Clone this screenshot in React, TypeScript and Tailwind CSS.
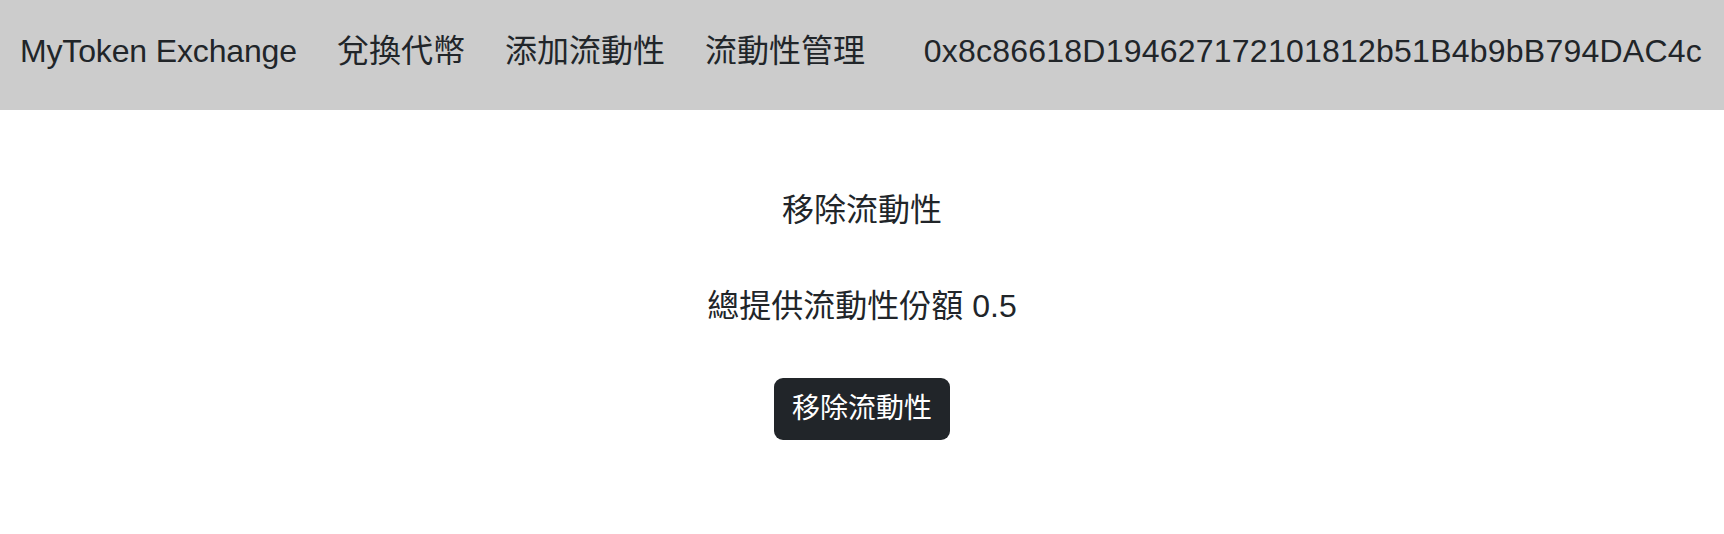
const font = { fontFamily: '"Liberation Sans", "Noto Sans CJK TC", Arial, sans-serif' };

export default function App() {
    const links = ["兌換代幣", "添加流動性", "流動性管理"];

    return (
        <div className="min-h-screen w-full bg-white text-[#212529]" style={font}>
            {/* Navbar */}
            <nav className="h-[110px] w-full bg-[#cccccc] flex flex-row items-start pt-[27px] pl-[20px] pr-[22px]">
                <div className="flex flex-row gap-[40px] text-[32px] leading-[48px]">
                    <span className="tracking-[-0.15px]">MyToken Exchange</span>
                    {links.map((l) => (
                        <a key={l} className="cursor-pointer">
                            {l}
                        </a>
                    ))}
                </div>
                <span className="ml-auto text-[32px] leading-[48px] tracking-[0.23px]">
                    0x8c86618D194627172101812b51B4b9bB794DAC4c
                </span>
            </nav>

            {/* Contenido */}
            <div className="flex flex-col items-center pt-[76px]">
                <p className="text-[32px] leading-[48px]">移除流動性</p>
                <p className="mt-[48px] text-[32px] leading-[48px]">總提供流動性份額 0.5</p>
                <button className="mt-[48px] bg-[#212529] text-white text-[28px] leading-[42px] px-[18px] py-[10px] rounded-[9px]">
                    移除流動性
                </button>
            </div>
        </div>
    );
}
